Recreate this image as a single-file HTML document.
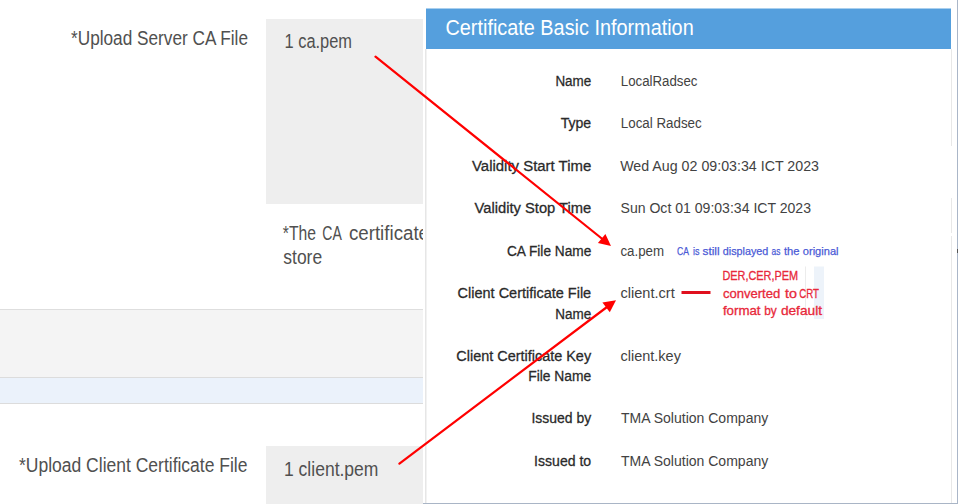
<!DOCTYPE html>
<html><head><meta charset="utf-8"><title>Certificate Basic Information</title>
<style>html,body{margin:0;padding:0;background:#ffffff;width:958px;height:504px;overflow:hidden;font-family:"Liberation Sans",sans-serif}</style>
</head><body>
<svg width="958" height="504" viewBox="0 0 958 504" style="display:block;font-family:'Liberation Sans',sans-serif">
<defs><clipPath id="clipL"><rect x="0" y="200" width="423" height="60"/></clipPath></defs>
<rect x="266" y="19" width="157" height="185" fill="#eeeeee"/>
<rect x="0" y="309" width="425" height="1" fill="#dedede"/>
<rect x="0" y="310" width="425" height="67" fill="#f4f4f4"/>
<rect x="0" y="377" width="425" height="1" fill="#dcdcdc"/>
<rect x="0" y="378" width="425" height="25" fill="#ebf2fb"/>
<rect x="0" y="403" width="425" height="1" fill="#dcdcdc"/>
<rect x="266" y="446" width="157" height="58" fill="#eeeeee"/>
<g clip-path="url(#clipL)"><text x="282.80" y="239.70" font-size="19.5" font-weight="normal" fill="#505050" textLength="33.19" lengthAdjust="spacingAndGlyphs">*The</text><text x="322.30" y="239.70" font-size="19.5" font-weight="normal" fill="#505050" textLength="19.49" lengthAdjust="spacingAndGlyphs">CA</text><text x="348.90" y="239.70" font-size="19.5" font-weight="normal" fill="#505050" textLength="80.15" lengthAdjust="spacingAndGlyphs">certificate</text></g>
<text x="71.00" y="45.00" font-size="19.5" font-weight="normal" fill="#505050" textLength="177.01" lengthAdjust="spacingAndGlyphs">*Upload Server CA File</text>
<text x="284.50" y="48.20" font-size="19.5" font-weight="normal" fill="#505050" textLength="67.51" lengthAdjust="spacingAndGlyphs">1 ca.pem</text>
<text x="283.30" y="264.30" font-size="19.5" font-weight="normal" fill="#505050" textLength="38.86" lengthAdjust="spacingAndGlyphs">store</text>
<text x="19.00" y="471.60" font-size="19.5" font-weight="normal" fill="#505050" textLength="228.50" lengthAdjust="spacingAndGlyphs">*Upload Client Certificate File</text>
<text x="284.00" y="475.50" font-size="19.5" font-weight="normal" fill="#505050" textLength="94.43" lengthAdjust="spacingAndGlyphs">1 client.pem</text>
<rect x="423" y="0" width="534" height="503" fill="#ffffff"/>
<rect x="425" y="49" width="1.5" height="454" fill="#e6e6e6"/>
<rect x="951" y="49" width="1" height="97" fill="#e8e8e8"/>
<rect x="951" y="198" width="1" height="35" fill="#e8e8e8"/>
<rect x="951" y="236" width="1" height="267" fill="#e8e8e8"/>
<rect x="426" y="8.5" width="525" height="40.5" fill="#559fdd"/>
<rect x="957" y="0" width="1" height="504" fill="#aab6c8"/>
<rect x="957" y="249" width="1" height="4" fill="#555555"/>
<rect x="423" y="503" width="535" height="1" fill="#a9b5c6"/>
<rect x="805" y="266.5" width="1" height="52.5" fill="#ececec"/>
<rect x="814" y="266.5" width="10" height="52.5" fill="#edf3fa"/>
<text x="445.50" y="34.60" font-size="21.4" font-weight="normal" fill="#ffffff" textLength="248.20" lengthAdjust="spacingAndGlyphs">Certificate Basic Information</text>
<text x="555.40" y="85.70" font-size="15.5" font-weight="normal" fill="#2a2a2a" textLength="35.84" lengthAdjust="spacingAndGlyphs" stroke="#2a2a2a" stroke-width="0.3">Name</text>
<text x="560.70" y="128.00" font-size="15.5" font-weight="normal" fill="#2a2a2a" textLength="30.50" lengthAdjust="spacingAndGlyphs" stroke="#2a2a2a" stroke-width="0.3">Type</text>
<text x="472.00" y="170.60" font-size="15.5" font-weight="normal" fill="#2a2a2a" textLength="119.25" lengthAdjust="spacingAndGlyphs" stroke="#2a2a2a" stroke-width="0.3">Validity Start Time</text>
<text x="474.50" y="213.00" font-size="15.5" font-weight="normal" fill="#2a2a2a" textLength="116.80" lengthAdjust="spacingAndGlyphs" stroke="#2a2a2a" stroke-width="0.3">Validity Stop Time</text>
<text x="506.90" y="255.80" font-size="15.5" font-weight="normal" fill="#2a2a2a" textLength="84.41" lengthAdjust="spacingAndGlyphs" stroke="#2a2a2a" stroke-width="0.3">CA File Name</text>
<text x="457.60" y="298.00" font-size="15.5" font-weight="normal" fill="#2a2a2a" textLength="133.59" lengthAdjust="spacingAndGlyphs" stroke="#2a2a2a" stroke-width="0.3">Client Certificate File</text>
<text x="555.30" y="318.50" font-size="15.5" font-weight="normal" fill="#2a2a2a" textLength="35.94" lengthAdjust="spacingAndGlyphs" stroke="#2a2a2a" stroke-width="0.3">Name</text>
<text x="456.30" y="361.20" font-size="15.5" font-weight="normal" fill="#2a2a2a" textLength="134.83" lengthAdjust="spacingAndGlyphs" stroke="#2a2a2a" stroke-width="0.3">Client Certificate Key</text>
<text x="528.20" y="381.20" font-size="15.5" font-weight="normal" fill="#2a2a2a" textLength="63.03" lengthAdjust="spacingAndGlyphs" stroke="#2a2a2a" stroke-width="0.3">File Name</text>
<text x="531.40" y="423.30" font-size="15.5" font-weight="normal" fill="#2a2a2a" textLength="59.75" lengthAdjust="spacingAndGlyphs" stroke="#2a2a2a" stroke-width="0.3">Issued by</text>
<text x="534.10" y="465.60" font-size="15.5" font-weight="normal" fill="#2a2a2a" textLength="57.10" lengthAdjust="spacingAndGlyphs" stroke="#2a2a2a" stroke-width="0.3">Issued to</text>
<text x="620.80" y="85.70" font-size="15.5" font-weight="normal" fill="#424242" textLength="76.71" lengthAdjust="spacingAndGlyphs">LocalRadsec</text>
<text x="620.80" y="128.00" font-size="15.5" font-weight="normal" fill="#424242" textLength="80.91" lengthAdjust="spacingAndGlyphs">Local Radsec</text>
<text x="620.20" y="170.60" font-size="15.5" font-weight="normal" fill="#424242" textLength="198.79" lengthAdjust="spacingAndGlyphs">Wed Aug 02 09:03:34 ICT 2023</text>
<text x="620.50" y="213.00" font-size="15.5" font-weight="normal" fill="#424242" textLength="190.47" lengthAdjust="spacingAndGlyphs">Sun Oct 01 09:03:34 ICT 2023</text>
<text x="620.40" y="255.80" font-size="15.5" font-weight="normal" fill="#424242" textLength="43.62" lengthAdjust="spacingAndGlyphs">ca.pem</text>
<text x="620.50" y="298.00" font-size="15.5" font-weight="normal" fill="#424242" textLength="54.21" lengthAdjust="spacingAndGlyphs">client.crt</text>
<text x="620.50" y="361.20" font-size="15.5" font-weight="normal" fill="#424242" textLength="60.42" lengthAdjust="spacingAndGlyphs">client.key</text>
<text x="621.00" y="423.30" font-size="15.5" font-weight="normal" fill="#424242" textLength="147.23" lengthAdjust="spacingAndGlyphs">TMA Solution Company</text>
<text x="621.00" y="465.60" font-size="15.5" font-weight="normal" fill="#424242" textLength="147.23" lengthAdjust="spacingAndGlyphs">TMA Solution Company</text>
<text x="677.10" y="254.70" font-size="11.8" font-weight="normal" fill="#4a5ad6" textLength="11.99" lengthAdjust="spacingAndGlyphs" stroke="#4a5ad6" stroke-width="0.25">CA</text>
<text x="692.90" y="254.70" font-size="11.8" font-weight="normal" fill="#4a5ad6" textLength="6.52" lengthAdjust="spacingAndGlyphs" stroke="#4a5ad6" stroke-width="0.25">is</text>
<text x="702.50" y="254.70" font-size="11.8" font-weight="normal" fill="#4a5ad6" textLength="17.14" lengthAdjust="spacingAndGlyphs" stroke="#4a5ad6" stroke-width="0.25">still</text>
<text x="722.80" y="254.70" font-size="11.8" font-weight="normal" fill="#4a5ad6" textLength="45.56" lengthAdjust="spacingAndGlyphs" stroke="#4a5ad6" stroke-width="0.25">displayed</text>
<text x="771.60" y="254.70" font-size="11.8" font-weight="normal" fill="#4a5ad6" textLength="8.87" lengthAdjust="spacingAndGlyphs" stroke="#4a5ad6" stroke-width="0.25">as</text>
<text x="784.00" y="254.70" font-size="11.8" font-weight="normal" fill="#4a5ad6" textLength="15.60" lengthAdjust="spacingAndGlyphs" stroke="#4a5ad6" stroke-width="0.25">the</text>
<text x="802.80" y="254.70" font-size="11.8" font-weight="normal" fill="#4a5ad6" textLength="35.74" lengthAdjust="spacingAndGlyphs" stroke="#4a5ad6" stroke-width="0.25">original</text>
<text x="722.50" y="279.70" font-size="12.8" font-weight="normal" fill="#e8283a" textLength="75.60" lengthAdjust="spacingAndGlyphs" stroke="#e8283a" stroke-width="0.3">DER,CER,PEM</text>
<text x="722.90" y="297.80" font-size="12.8" font-weight="normal" fill="#e8283a" textLength="57.41" lengthAdjust="spacingAndGlyphs" stroke="#e8283a" stroke-width="0.3">converted</text>
<text x="785.00" y="297.80" font-size="12.8" font-weight="normal" fill="#e8283a" textLength="11.97" lengthAdjust="spacingAndGlyphs" stroke="#e8283a" stroke-width="0.3">to</text>
<text x="799.30" y="297.80" font-size="12.8" font-weight="normal" fill="#e8283a" textLength="19.68" lengthAdjust="spacingAndGlyphs" stroke="#e8283a" stroke-width="0.3">CRT</text>
<text x="722.90" y="315.40" font-size="12.8" font-weight="normal" fill="#e8283a" textLength="37.67" lengthAdjust="spacingAndGlyphs" stroke="#e8283a" stroke-width="0.3">format</text>
<text x="764.20" y="315.40" font-size="12.8" font-weight="normal" fill="#e8283a" textLength="12.52" lengthAdjust="spacingAndGlyphs" stroke="#e8283a" stroke-width="0.3">by</text>
<text x="780.90" y="315.40" font-size="12.8" font-weight="normal" fill="#e8283a" textLength="41.13" lengthAdjust="spacingAndGlyphs" stroke="#e8283a" stroke-width="0.3">default</text>
<line x1="375.5" y1="56.7" x2="603" y2="239.5" stroke="#ff0000" stroke-width="2.2" stroke-linecap="round"/>
<polygon points="611,246 605.4,233.9 597.9,243" fill="#ff0000"/>
<line x1="399.4" y1="463.7" x2="607" y2="307" stroke="#ff0000" stroke-width="2.2" stroke-linecap="round"/>
<polygon points="616,300.3 602.4,302.5 609.8,312.2" fill="#ff0000"/>
<rect x="681.5" y="291" width="29" height="3" fill="#e0101e"/>
</svg>
</body></html>
